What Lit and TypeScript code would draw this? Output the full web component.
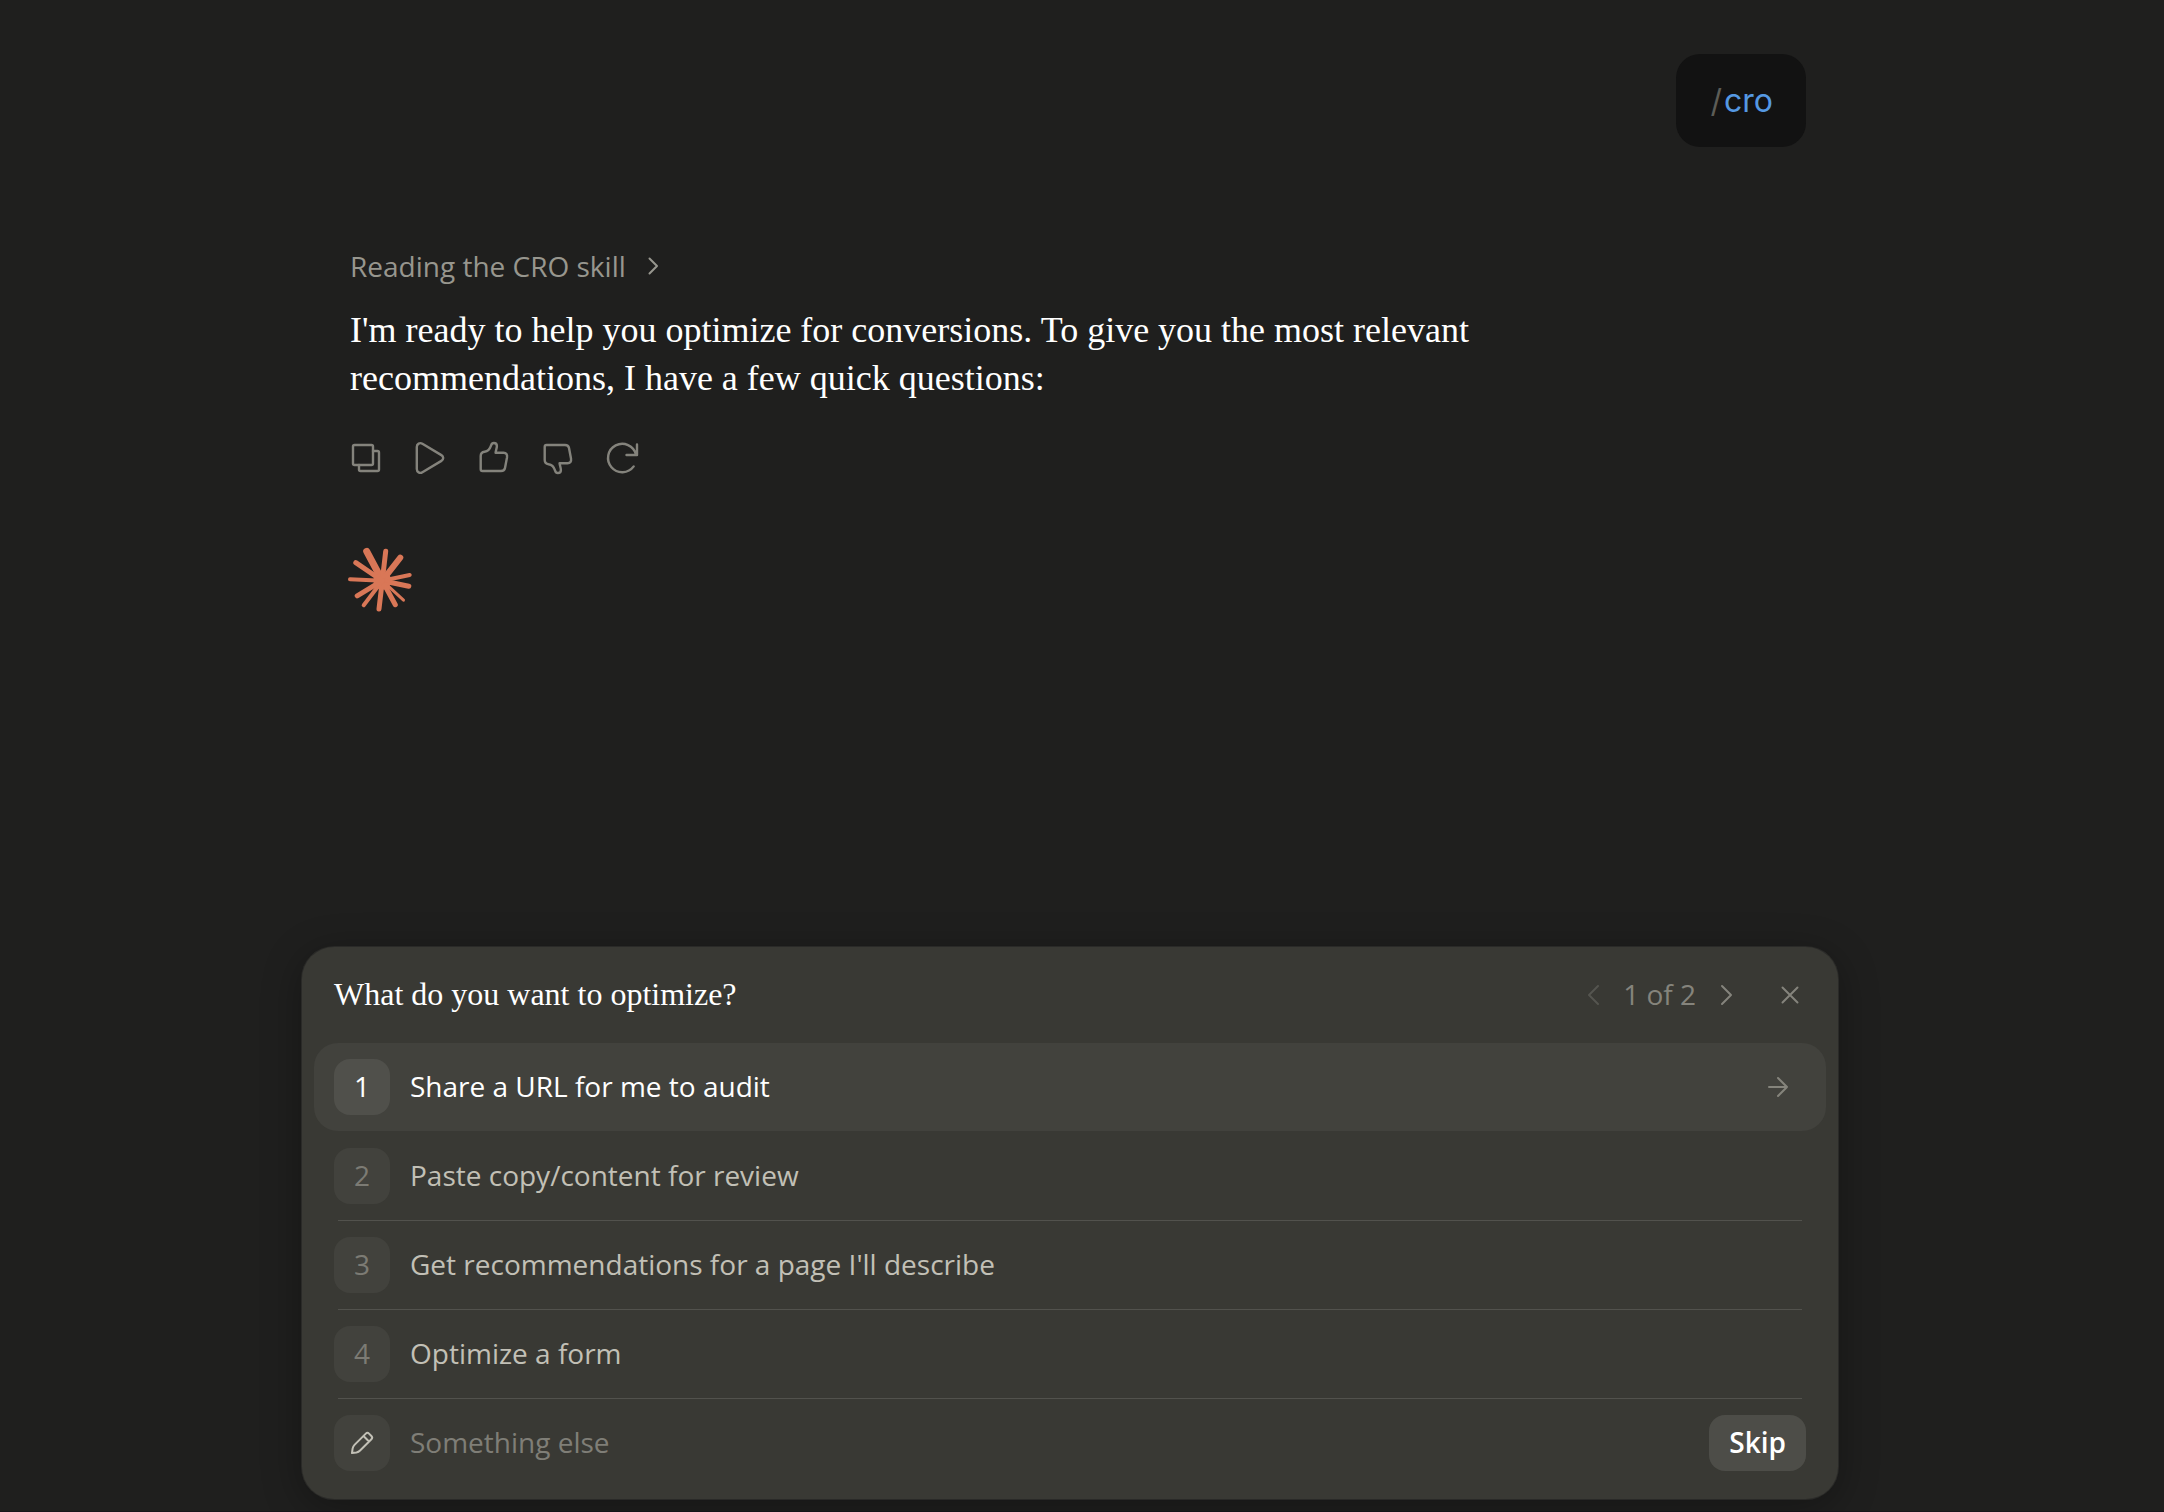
import { LitElement, html, css, svg } from "lit";
import { customElement, property, state } from "lit/decorators.js";
import { classMap } from "lit/directives/class-map.js";

const THUMB =
  "M8.5 33H27c2.4 0 3.6-.8 4-3l2-10.5c.5-3-.8-4.8-3.4-4.8h-8c.2-2 1.3-4.6 1.3-6.6C22.9 6 21.5 5 19.8 5c-1.6 0-2.2.8-2.7 2.4C16 10.8 14 13.4 10.6 13.8 8 14.2 6.7 15.2 6.7 18v13.2c0 1.1.7 1.8 1.8 1.8Z";

const ACTIONS = [
  {
    label: "Copy",
    icon: svg`<rect x="7" y="7" width="20" height="20" rx="1.5"/><path d="M27 13h4.5a1.500 1.500 0 0 1 1.500 1.500v17a1.500 1.500 0 0 1-1.500 1.500h-17a1.500 1.500 0 0 1-1.500-1.500V27"/>`,
  },
  {
    label: "Read aloud",
    icon: svg`<path d="M6.8 9v22c0 3.2 3 4.8 5.6 3.2l19-11.3c2.4-1.4 2.4-4.4 0-5.8l-19-11.3C9.8 4.2 6.8 5.8 6.8 9Z"/>`,
  },
  { label: "Good response", icon: svg`<path d=${THUMB}/>` },
  {
    label: "Bad response",
    icon: svg`<path transform="matrix(1 0 0 -1 0 40)" d=${THUMB}/>`,
  },
  {
    label: "Retry",
    icon: svg`<path d="M35 6.5V17H24.5M34 16.5A14.2 14.2 0 1 0 31.7 28.4"/>`,
  },
];

/* Tip x, tip y and thickness of each ray of the mark. */
const RAYS = [
  [18.7, 3.3, 7], [37.7, 3.3, 5], [52.3, 9.7, 6], [61.7, 27, 4],
  [60.8, 38.3, 5], [55.5, 52.2, 3], [47.3, 56.7, 5], [31, 61, 5],
  [15.7, 57.2, 4], [9.2, 47.8, 5], [2, 31.3, 4], [7.8, 14.6, 5],
];

const OPTIONS = [
  "Share a URL for me to audit",
  "Paste copy/content for review",
  "Get recommendations for a page I'll describe",
  "Optimize a form",
];

const reset = css`
  *,
  *::before {
    box-sizing: border-box;
  }
  button,
  input {
    margin: 0;
    padding: 0;
    border: 0;
    background: none;
    color: inherit;
    font: inherit;
    text-align: left;
  }
  button {
    cursor: pointer;
  }
  svg {
    display: block;
    flex: none;
    fill: none;
    stroke: currentColor;
    stroke-width: 2;
    stroke-linecap: round;
    stroke-linejoin: round;
    overflow: visible;
  }
`;

@customElement("chat-thread")
class ChatThread extends LitElement {
  static styles = [
    reset,
    css`
      :host {
        display: flex;
        flex-direction: column;
        align-items: flex-start;
        padding: 54px 32px 32px 48px;
      }
      .bubble {
        display: flex;
        gap: 2px;
        align-self: flex-end;
        padding: 24px 33px 24px 34px;
        border-radius: 24px;
        background: #121212;
        color: #5598e2;
        font-family: Inter, sans-serif;
        font-size: 32px;
        line-height: 45px;
      }
      .slash {
        color: #5c5c56;
      }
      .status {
        display: flex;
        align-items: center;
        gap: 22px;
        margin-top: 99px;
        color: #97968e;
        line-height: 40px;
      }
      .reply {
        max-width: 1280px;
        margin: 20px 0 24px;
        color: #fff;
        font-family: "Liberation Serif", serif;
        font-size: 36px;
        line-height: 48px;
      }
      .actions {
        display: flex;
        margin-left: -16px;
        color: #84837c;
      }
      .action {
        display: grid;
        place-items: center;
        width: 64px;
        height: 64px;
      }
      .glyph {
        stroke-width: 2.4;
      }
      .mark {
        margin: 58px 0 0 -2px;
        color: #d97757;
      }
      .core {
        fill: currentColor;
        stroke: none;
      }
    `,
  ];

  render() {
    return html`
      <div class="bubble"><span class="slash">/</span><span>cro</span></div>
      <button class="status" type="button">
        Reading the CRO skill
        <svg width="10" height="16" viewBox="0 0 10 16" aria-hidden="true">
          <path d="M1.5 .5 9 8 1.5 15.5" />
        </svg>
      </button>
      <p class="reply">
        I'm ready to help you optimize for conversions. To give you the most
        relevant recommendations, I have a few quick questions:
      </p>
      <div class="actions">
        ${ACTIONS.map(
          (a) => html`<button class="action" type="button" aria-label=${a.label}>
            <svg class="glyph" width="40" height="40" viewBox="0 0 40 40">${a.icon}</svg>
          </button>`
        )}
      </div>
      <svg class="mark" width="64" height="64" viewBox="0 0 64 64" aria-hidden="true">
        <circle class="core" cx="34.3" cy="32.7" r="9" />
        ${RAYS.map(
          ([x, y, w]) => svg`<path stroke-width=${w} d="M34.3 32.7L${x} ${y}"/>`
        )}
      </svg>
    `;
  }
}

@customElement("question-card")
class QuestionCard extends LitElement {
  @property({ type: Array }) options: string[] = [];
  @state() private selected = 0;

  static styles = [
    reset,
    css`
      :host {
        display: block;
        padding: 0 12px 12px;
        border-radius: 32px;
        background: #393934;
        box-shadow: 0 0 0 1px #2a2a28, 0 8px 40px rgba(0, 0, 0, 0.32);
      }
      .head {
        display: flex;
        align-items: center;
        min-height: 96px;
        padding: 0 20px;
        color: #85847c;
      }
      .title {
        flex: 1;
        margin: 0;
        padding-bottom: 2px;
        color: #fff;
        font-family: "Liberation Serif", serif;
        font-size: 32px;
        font-weight: 400;
        line-height: 40px;
      }
      .count {
        padding: 0 2px 2px;
      }
      .icon {
        display: grid;
        place-items: center;
        width: 56px;
        height: 56px;
      }
      .icon:disabled {
        color: #55554f;
      }
      .close {
        margin: 0 -12px 0 8px;
      }
      .list {
        margin: 0;
        padding: 0;
        list-style: none;
      }
      .item {
        padding-bottom: 1px;
        background: linear-gradient(#52524d, #52524d) bottom / calc(100% - 48px) 1px
          no-repeat;
      }
      .item.plain {
        background: none;
      }
      .row {
        display: flex;
        align-items: center;
        gap: 20px;
        width: 100%;
        min-height: 88px;
        padding: 0 20px;
        border-radius: 24px;
        color: #c2c0b6;
      }
      .row.active {
        background: #42423d;
        color: #fff;
      }
      .badge {
        display: grid;
        place-items: center;
        flex: none;
        width: 56px;
        height: 56px;
        padding-bottom: 2px;
        border-radius: 16px;
        background: #42423d;
        color: #7c7b74;
      }
      .active .badge {
        background: #50504b;
        color: #fff;
      }
      .badge.pen {
        padding: 0;
        color: #c2c0b6;
      }
      .text {
        flex: 1;
        min-width: 0;
        padding-bottom: 2px;
      }
      .text::placeholder {
        color: #7f7e77;
        opacity: 1;
      }
      .go {
        margin-right: 18px;
        color: #85847c;
      }
      .skip {
        min-height: 56px;
        padding: 0 20px 2px;
        border-radius: 16px;
        background: #4d4d48;
        color: #fff;
        font-weight: 600;
      }
    `,
  ];

  render() {
    return html`
      <div class="head">
        <h2 class="title">What do you want to optimize?</h2>
        <button class="icon" type="button" aria-label="Previous question" disabled>
          <svg width="12" height="20" viewBox="0 0 12 20"><path d="M11 1 2 10l9 9" /></svg>
        </button>
        <span class="count">1 of 2</span>
        <button class="icon" type="button" aria-label="Next question">
          <svg width="12" height="20" viewBox="0 0 12 20"><path d="m2 1 9 9-9 9" /></svg>
        </button>
        <button class="icon close" type="button" aria-label="Close">
          <svg width="16" height="16" viewBox="0 0 16 16"><path d="m.5.5 15 15m0-15-15 15" /></svg>
        </button>
      </div>
      <ul class="list">
        ${this.options.map((text, i) => {
          const active = i === this.selected;
          return html`<li class=${classMap({ item: true, plain: active })}>
            <button
              type="button"
              class=${classMap({ row: true, active })}
              @click=${() => (this.selected = i)}
            >
              <span class="badge">${i + 1}</span>
              <span class="text">${text}</span>
              ${active
                ? html`<svg class="go" width="20" height="20" viewBox="0 0 20 20" aria-hidden="true">
                    <path d="M1 10h18M10 1l9 9-9 9" />
                  </svg>`
                : ""}
            </button>
          </li>`;
        })}
      </ul>
      <div class="row">
        <label class="badge pen" for="other" aria-label="Something else">
          <svg width="24" height="24" viewBox="0 0 24 24" aria-hidden="true">
            <path
              d="M2 22l.6-4.4c.3-1.6.8-2.6 1.9-3.7L15.8 2.6c1-1 2.2-1 3.2 0L21.4 5c1 1 1 2.2 0 3.2L10.1 19.5C9 20.6 8 21.1 6.4 21.4ZM13.5 5l5.5 5.5"
            />
          </svg>
        </label>
        <input id="other" class="text" type="text" placeholder="Something else" />
        <button class="skip" type="button">Skip</button>
      </div>
    `;
  }
}

@customElement("app-root")
class AppRoot extends LitElement {
  static styles = css`
    :host {
      display: flex;
      flex-direction: column;
      box-sizing: border-box;
      min-height: 100vh;
      padding: 0 24px 12px 0;
      border-bottom: 1px solid #18161c;
      background: #1f1f1e;
      font-family: "Open Sans", sans-serif;
      font-size: 28px;
      line-height: 40px;
    }
    .thread,
    .card {
      width: 100%;
      max-width: 1536px;
      box-sizing: border-box;
      margin: 0 auto;
    }
    .thread {
      flex: 1;
    }
  `;

  render() {
    return html`
      <chat-thread class="thread"></chat-thread>
      <question-card class="card" .options=${OPTIONS}></question-card>
    `;
  }
}
